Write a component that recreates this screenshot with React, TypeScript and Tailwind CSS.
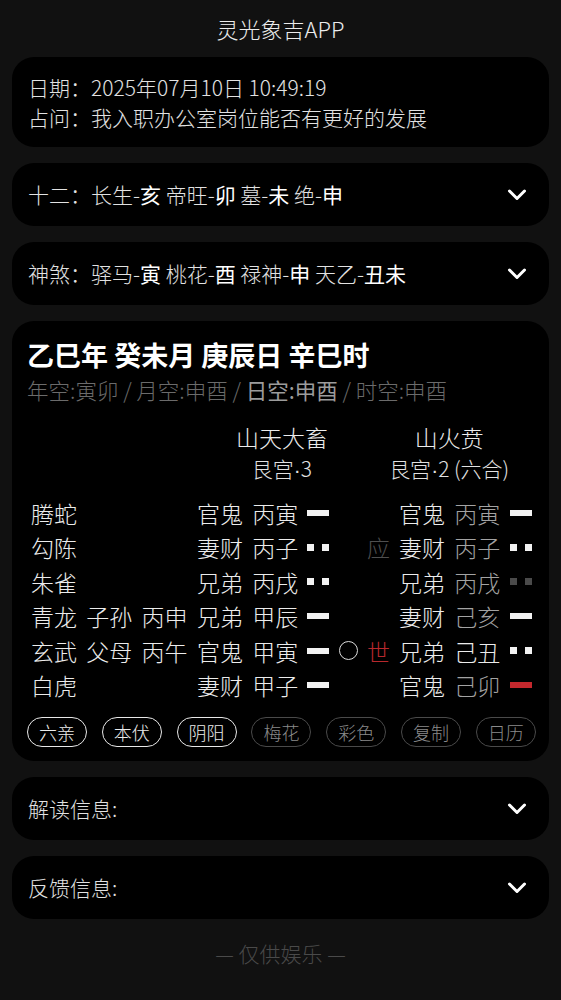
import React from 'react';

type Yao = 'yang' | 'yin';

type Row = {
  god: string;
  fu?: [string, string];
  main: [string, string];
  yao: Yao;
  dong?: boolean;
  mark?: 'shi' | 'ying';
  chg: [string, string];
  chgBright?: boolean;
  chgYao: Yao;
  chgYaoColor: string;
};

const rows: Row[] = [
  { god: '腾蛇', main: ['官鬼', '丙寅'], yao: 'yang', chg: ['官鬼', '丙寅'], chgYao: 'yang', chgYaoColor: 'bg-[#f2f2f2]' },
  { god: '勾陈', main: ['妻财', '丙子'], yao: 'yin', mark: 'ying', chg: ['妻财', '丙子'], chgYao: 'yin', chgYaoColor: 'bg-[#f2f2f2]' },
  { god: '朱雀', main: ['兄弟', '丙戌'], yao: 'yin', chg: ['兄弟', '丙戌'], chgYao: 'yin', chgYaoColor: 'bg-[#4a4a4a]' },
  { god: '青龙', fu: ['子孙', '丙申'], main: ['兄弟', '甲辰'], yao: 'yang', chg: ['妻财', '己亥'], chgYao: 'yang', chgYaoColor: 'bg-[#f2f2f2]' },
  { god: '玄武', fu: ['父母', '丙午'], main: ['官鬼', '甲寅'], yao: 'yang', dong: true, mark: 'shi', chg: ['兄弟', '己丑'], chgBright: true, chgYao: 'yin', chgYaoColor: 'bg-[#f2f2f2]' },
  { god: '白虎', main: ['妻财', '甲子'], yao: 'yang', chg: ['官鬼', '己卯'], chgYao: 'yang', chgYaoColor: 'bg-[#c4282d]' },
];

const pills = [
  { label: '六亲', on: true },
  { label: '本伏', on: true },
  { label: '阴阳', on: true },
  { label: '梅花', on: false },
  { label: '彩色', on: false },
  { label: '复制', on: false },
  { label: '日历', on: false },
];

function YaoMark({ type, color }: { type: Yao; color: string }) {
  if (type === 'yang') {
    return <div className={`w-[22px] h-[6px] ${color}`} />;
  }
  return (
    <div className="w-[22px] flex justify-between">
      <div className={`w-[7px] h-[7px] ${color}`} />
      <div className={`w-[7px] h-[7px] ${color}`} />
    </div>
  );
}

function Chevron() {
  return (
    <svg width="20" height="12" viewBox="0 0 20 12" fill="none" className="shrink-0">
      <polyline points="2.5,2 10,9.5 17.5,2" stroke="#ffffff" strokeWidth="3" strokeLinecap="round" strokeLinejoin="round" />
    </svg>
  );
}

function FoldCard({ children }: { children: React.ReactNode }) {
  return (
    <div className="h-[63px] bg-black rounded-[22px] pl-[16px] pr-[22px] flex items-center justify-between">
      <div className="text-[21px] font-light text-[#e2e2e2] leading-none">{children}</div>
      <Chevron />
    </div>
  );
}

// 半角间隔点，Noto CJK 里的 · 太宽
const Dot = () => <span className="font-['Liberation_Sans']">·</span>;

export default function App() {
  return (
    <div
      className="min-h-[1000px] bg-[#111111] text-[#e2e2e2] pb-10 font-light"
      style={{ fontFamily: '"Noto Sans CJK SC", "Noto Sans", sans-serif' }}
    >
      {/* 顶部标题 */}
      <div className="h-[57px] flex items-center justify-center text-[22px] text-[#ececec]">灵光象吉APP</div>

      <div className="px-[12px] w-[561px] flex flex-col gap-4">
        {/* 日期 / 占问 */}
        <div className="bg-black rounded-[22px] pl-[16px] pt-[15px] pb-[15px] text-[21px] leading-[30px]">
          <div>日期：2025年07月10日 10:49:19</div>
          <div>占问：我入职办公室岗位能否有更好的发展</div>
        </div>

        <FoldCard>
          十二：长生-<b className="text-white">亥</b> 帝旺-<b className="text-white">卯</b> 墓-<b className="text-white">未</b> 绝-<b className="text-white">申</b>
        </FoldCard>

        <FoldCard>
          神煞：驿马-<b className="text-white">寅</b> 桃花-<b className="text-white">酉</b> 禄神-<b className="text-white">申</b> 天乙-<b className="text-white">丑未</b>
        </FoldCard>

        {/* 排盘 */}
        <div className="bg-black rounded-[22px] pl-[15px] pr-[13px] pt-[16px] pb-[14px]">
          <div className="text-[27px] font-bold leading-[36px] text-white">乙巳年 癸未月 庚辰日 辛巳时</div>
          <div className="mt-[2px] text-[21.5px] leading-[30px] text-[#6b6b6b]">
            年空:寅卯 / 月空:申酉 / <b className="text-[#9c9c9c]">日空:申酉</b> / 时空:申酉
          </div>

          <div className="mt-[16px] flex pl-[4px]">
            <div className="w-[165.9px] shrink-0" />
            <div className="w-[170px] shrink-0 flex flex-col items-center">
              <div className="text-[23px] leading-[32px] text-[#ececec]">山天大畜</div>
              <div className="text-[21px] leading-[30px] text-[#e2e2e2]">艮宫<Dot />3</div>
            </div>
            <div className="w-[164.6px] shrink-0 flex flex-col items-center">
              <div className="text-[23px] leading-[32px] text-[#ececec]">山火贲</div>
              <div className="text-[21px] leading-[30px] text-[#e2e2e2]">艮宫<Dot />2 (六合)</div>
            </div>
          </div>

          <div className="mt-[11px] pl-[4px] text-[23px]">
            {rows.map((r) => (
              <div key={r.god} className="h-[34.4px] flex items-center whitespace-nowrap">
                <div className="w-[55.3px] shrink-0 text-[#ececec]">{r.god}</div>
                <div className="w-[55.3px] shrink-0 text-[#ececec]">{r.fu ? r.fu[0] : ''}</div>
                <div className="w-[55.3px] shrink-0 text-[#ececec]">{r.fu ? r.fu[1] : ''}</div>
                <div className="w-[55.3px] shrink-0 text-[#ececec]">{r.main[0]}</div>
                <div className="w-[55.3px] shrink-0 text-[#ececec]">{r.main[1]}</div>
                <div className="w-[22px] shrink-0 flex items-center">
                  <YaoMark type={r.yao} color="bg-[#f2f2f2]" />
                </div>
                <div className="w-[37.5px] shrink-0 flex justify-center">
                  {r.dong && <div className="w-[19px] h-[19px] rounded-full border-[1.5px] border-[#dcdcdc]" />}
                </div>
                <div className="w-[32px] shrink-0">
                  {r.mark === 'shi' && <span className="text-[#b8282d]">世</span>}
                  {r.mark === 'ying' && <span className="text-[#4f4f4f]">应</span>}
                </div>
                <div className="w-[55.3px] shrink-0 text-[#ececec]">{r.chg[0]}</div>
                <div className={`w-[55.3px] shrink-0 ${r.chgBright ? 'text-[#ececec]' : 'text-[#a3a3a3]'}`}>{r.chg[1]}</div>
                <div className="w-[22px] shrink-0 flex items-center">
                  <YaoMark type={r.chgYao} color={r.chgYaoColor} />
                </div>
              </div>
            ))}
          </div>

          {/* 功能按钮 */}
          <div className="mt-[15px] flex gap-[14.8px] overflow-hidden">
            {pills.map((p) => (
              <div
                key={p.label}
                className={`w-[60px] h-[30px] shrink-0 rounded-full flex items-center justify-center text-[18px] leading-none border-[1.5px] ${
                  p.on ? 'border-[#e8e8e8] text-[#ececec]' : 'border-[#4a4a4a] text-[#8a8a8a]'
                }`}
              >
                {p.label}
              </div>
            ))}
          </div>
        </div>

        <FoldCard>解读信息:</FoldCard>
        <FoldCard>反馈信息:</FoldCard>
      </div>

      <div className="mt-[19px] text-center text-[21px] leading-[30px] text-[#4a4a4a]">— 仅供娱乐 —</div>
    </div>
  );
}
